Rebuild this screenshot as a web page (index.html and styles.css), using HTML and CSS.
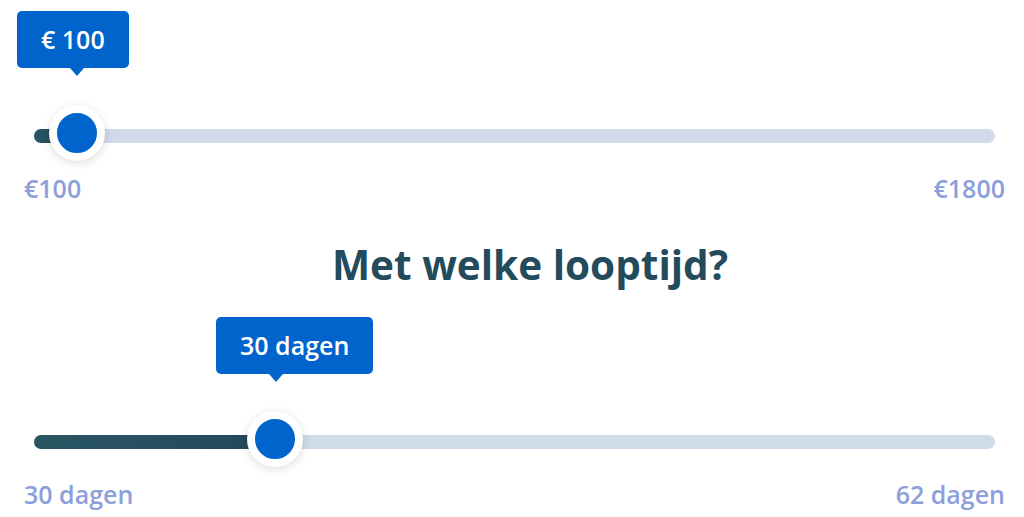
FILE: index.html
```html
<!DOCTYPE html>
<html lang="nl">
<head>
    <meta charset="UTF-8">
    <meta name="viewport" content="width=device-width, initial-scale=1.0">
    <link rel="stylesheet" href="styles.css">
    <title>Lening berekenen</title>
</head>
<body>

    <div class="calculator">

        <div class="slider">
            <div class="bubble" style="left: -7px;">€ 100</div>
            <div class="track">
                <div class="fill" style="width: 43px;"></div>
                <div class="thumb" style="left: 43px;"></div>
            </div>
            <div class="range-labels">
                <span>€100</span>
                <span>€1800</span>
            </div>
        </div>

        <h2 class="question">Met welke looptijd?</h2>

        <div class="slider">
            <div class="bubble" style="left: 192px;">30 dagen</div>
            <div class="track">
                <div class="fill" style="width: 241px;"></div>
                <div class="thumb" style="left: 241px;"></div>
            </div>
            <div class="range-labels">
                <span>30 dagen</span>
                <span>62 dagen</span>
            </div>
        </div>

    </div>

</body>
</html>
```

FILE: styles.css
```css
body {
    font-family: 'Open Sans', 'Liberation Sans', sans-serif;
    background-color: #fff;
    margin: 0;
    padding: 0;
}

.calculator {
    padding: 0 19px 0 24px;
}

.slider {
    position: relative;
    padding-top: 129px;
}

.bubble {
    position: absolute;
    top: 11px;
    background-color: #0064cc;
    color: #fff;
    font-size: 25px;
    font-weight: 600;
    line-height: 33px;
    padding: 12px 24px;
    border-radius: 5px;
    white-space: nowrap;
}

/* little arrow under the bubble */
.bubble::after {
    content: '';
    position: absolute;
    left: 53px;
    bottom: -8px;
    border-left: 7px solid transparent;
    border-right: 7px solid transparent;
    border-top: 8px solid #0064cc;
}

.track {
    position: relative;
    height: 14px;
    margin: 0 10px;
    background-color: #d0dbe9;
    border-radius: 7px;
}

.fill {
    height: 100%;
    background: linear-gradient(to right, #2a5664, #23485a);
    border-radius: 7px 0 0 7px;
}

.thumb {
    position: absolute;
    top: -24px;
    width: 40px;
    height: 40px;
    margin-left: -28px;
    background-color: #0064cc;
    border: 8px solid #fff;
    border-radius: 50%;
    box-shadow: 0 2px 10px rgba(0, 0, 0, 0.14);
}

.range-labels {
    display: flex;
    justify-content: space-between;
    margin-top: 29px;
    font-size: 25px;
    font-weight: 600;
    line-height: 32px;
    color: #8c9fdb;
}

.question {
    margin: 37px 0 17px;
    padding-left: 31px;
    text-align: center;
    font-size: 40.5px;
    font-weight: 700;
    line-height: 48px;
    color: #234b5b;
}
```
